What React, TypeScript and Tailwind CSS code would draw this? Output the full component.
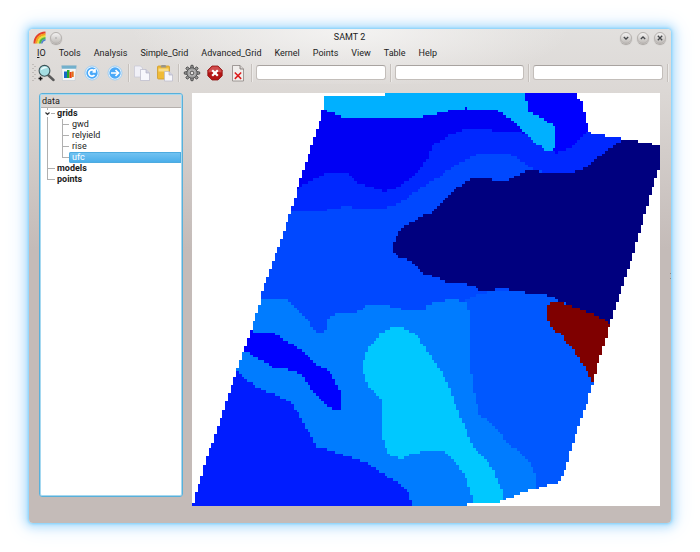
import React from "react";

type Point = [number, number];
type Region = { color: string; points: Point[] };

const MAP = { x: 192, y: 93, cols: 170, rows: 150, cell: 468 / 170 };

const outline: Point[] = [
  [325, 95], [386, 95], [386, 92], [575, 92], [582, 102], [585, 115], [588, 127], [590, 133], [602, 135],
  [617, 138], [632, 140], [647, 143], [661, 146], [661, 163], [654, 183], [644, 218], [636, 245], [627, 272],
  [619, 298], [610, 325], [598, 363], [593, 382], [588, 400], [580, 423], [572, 447], [565, 470], [560, 482],
  [548, 485], [535, 489], [520, 493], [510, 498], [500, 500], [499, 502], [467, 503], [466, 506], [192, 506],
  [195, 497], [205, 463], [218, 427], [237, 370], [244, 350], [251, 330], [261, 300], [262, 292], [291, 212],
  [298, 187], [322, 115],
];

const regions: Region[] = [
  { color: "#0028ff", points: [
    [280, 90], [661, 90], [640, 130], [622, 140], [605, 152], [595, 160], [585, 168], [572, 172], [542, 172],
    [532, 168], [522, 162], [510, 154], [478, 154], [455, 165], [442, 175], [425, 185], [402, 202], [385, 208],
    [342, 207], [323, 211], [298, 211], [280, 208]] },
  { color: "#0000f4", points: [
    [290, 90], [527, 90], [540, 140], [525, 134], [521, 131], [505, 133], [487, 129], [465, 129], [450, 135],
    [433, 145], [428, 157], [423, 165], [415, 175], [402, 185], [385, 192], [358, 183], [347, 173], [328, 173],
    [312, 180], [298, 188], [280, 200]] },
  { color: "#0000ff", points: [
    [524, 90], [600, 90], [592, 128], [588, 132], [580, 138], [572, 148], [555, 153], [549, 148], [520, 110]] },
  { color: "#00b0ff", points: [
    [310, 90], [524, 90], [527, 102], [527, 111], [542, 118], [555, 126], [555, 147], [549, 151], [542, 148],
    [525, 134], [512, 120], [501, 112], [491, 109], [468, 109], [467, 107], [465, 109], [455, 109], [441, 113],
    [425, 116], [408, 119], [362, 119], [358, 117], [342, 117], [333, 113], [322, 109], [310, 105]] },
  { color: "#0058ff", points: [
    [465, 301], [473, 296], [492, 291], [560, 291], [640, 300], [620, 500], [538, 510], [470, 500]] },
  { color: "#007cff", points: [
    [240, 300], [266, 300], [272, 298], [288, 301], [302, 313], [312, 327], [318, 333], [327, 330], [328, 320],
    [337, 312], [357, 313], [365, 306], [388, 306], [405, 310], [425, 311], [425, 307], [430, 304], [438, 301],
    [443, 302], [447, 300], [458, 300], [467, 304], [471, 317], [470, 360], [473, 390], [480, 415], [493, 425],
    [508, 443], [528, 460], [535, 473], [540, 510], [190, 510]] },
  { color: "#00c8ff", points: [
    [392, 328], [382, 332], [368, 348], [364, 360], [364, 375], [370, 388], [382, 400], [381, 423], [384, 443],
    [389, 454], [401, 459], [412, 454], [425, 451], [440, 450], [448, 454], [463, 472], [469, 487], [474, 502],
    [502, 502], [502, 490], [493, 470], [487, 460], [472, 445], [463, 423], [455, 403], [450, 388], [440, 370],
    [425, 348], [415, 333], [403, 328]] },
  { color: "#001cff", points: [
    [230, 364], [237, 370], [255, 387], [275, 395], [292, 403], [302, 420], [317, 447], [341, 454], [365, 462],
    [385, 475], [398, 482], [408, 493], [414, 507], [185, 510]] },
  { color: "#0000ff", points: [
    [240, 330], [251, 330], [256, 332], [273, 333], [302, 350], [313, 362], [330, 372], [341, 393], [342, 410],
    [337, 409], [328, 407], [315, 395], [302, 375], [288, 369], [275, 368], [257, 358], [244, 350], [230, 348]] },
  { color: "#00007f", points: [
    [622, 140], [640, 130], [670, 140], [670, 180], [612, 330], [605, 319], [588, 313], [572, 306], [557, 300],
    [552, 296], [528, 293], [505, 289], [495, 289], [492, 292], [480, 291], [473, 285], [447, 282], [435, 277],
    [425, 274], [412, 262], [395, 255], [391, 247], [396, 237], [403, 227], [425, 215], [432, 212], [447, 197],
    [458, 187], [470, 179], [490, 179], [497, 181], [508, 181], [517, 175], [528, 170], [542, 172], [572, 172],
    [585, 168], [595, 160], [605, 152]] },
  { color: "#7f0000", points: [
    [547, 307], [550, 303], [560, 303], [572, 306], [588, 313], [605, 319], [612, 326], [600, 370], [593, 384],
    [585, 368], [572, 347], [558, 332], [550, 327], [547, 318]] },
];

function contains(points: Point[], x: number, y: number) {
  let inside = false;
  for (let i = 0, j = points.length - 1; i < points.length; j = i++) {
    const [xi, yi] = points[i];
    const [xj, yj] = points[j];
    if (yi > y !== yj > y && x < ((xj - xi) * (y - yi)) / (yj - yi) + xi) inside = !inside;
  }
  return inside;
}

// Samples the soil regions on the raster and joins equal cells of a row into runs.
function rasterise() {
  const paths: Record<string, string> = {};
  for (let r = 0; r < MAP.rows; r++) {
    const y = MAP.y + (r + 0.5) * MAP.cell;
    let start = 0;
    let current = "";
    for (let c = 0; c <= MAP.cols; c++) {
      const x = MAP.x + (c + 0.5) * MAP.cell;
      let color = "";
      if (c < MAP.cols && contains(outline, x, y)) {
        color = "#0048ff";
        for (const region of regions) if (contains(region.points, x, y)) color = region.color;
      }
      if (color !== current) {
        if (current) paths[current] = (paths[current] ?? "") + `M${start} ${r}H${c}V${r + 1}H${start}Z`;
        start = c;
        current = color;
      }
    }
  }
  return Object.entries(paths);
}

const layers = rasterise();

function GridMap() {
  return (
    <svg viewBox="0 0 170 150" shapeRendering="crispEdges" role="img" aria-label="ufc grid" className="block w-full bg-white">
      {layers.map(([color, d]) => <path key={color} d={d} fill={color} />)}
    </svg>
  );
}

const ico = "block size-[18px]";

function ZoomIcon() {
  return (
    <svg viewBox="0 0 18 18" className={ico}>
      <path d="M11 11l5.500 5" stroke="#5a5a5a" strokeWidth="2.400" strokeLinecap="round" />
      <circle cx="7.500" cy="6.800" r="5.400" fill="#a4dde2" stroke="#3c5357" strokeWidth="1.100" />
      <path d="M3.600 6.500a4 4 0 0 1 7-2.400c-2 .2-5 .8-7 2.400z" fill="#e9fafa" />
      <path d="M3.500 12.500v4M1.500 14.500h4" stroke="#111" strokeWidth="1.400" />
    </svg>
  );
}
function ChartIcon() {
  return (
    <svg viewBox="0 0 18 18" className={ico}>
      <path d="M1.500 2h15L15 16.500H2.500z" fill="#f3f6f8" stroke="#c2c8cc" strokeWidth=".6" />
      <path d="M1.500 1.500h15l-.4 3.300H1.900z" fill="#72b0cc" />
      <path d="M4 7.500h3V14H4z" fill="#1668c8" />
      <path d="M7 6h2.500v8H7z" fill="#24a82c" />
      <path d="M9.500 8h2.200v6H9.500z" fill="#e93d10" />
      <path d="M11.700 7.500h2V13h-2z" fill="#e2711b" />
    </svg>
  );
}
function RoundIcon({ children }: { children: React.ReactNode }) {
  return (
    <svg viewBox="0 0 18 18" className={ico}>
      <circle cx="9" cy="9" r="7" fill="#eef7fe" stroke="#8fc6f2" strokeWidth=".8" />
      <circle cx="9" cy="9" r="5.700" fill="#4ba9f8" />
      <g fill="none" stroke="#fff" strokeWidth="1.700">{children}</g>
    </svg>
  );
}
function CopyIcon() {
  return (
    <svg viewBox="0 0 18 18" className={ico}>
      <path d="M1.500 2h6l2 2v9h-8z" fill="#f0f0f7" stroke="#c6c6d4" strokeWidth=".7" />
      <path d="M7.500 5.500h5.500l3.500 3.500v7.500h-9z" fill="#f7f7fc" stroke="#b9b9ca" strokeWidth=".7" />
      <path d="M13 5.500V9h3.500" fill="#d0d0e0" stroke="#b3b3c4" strokeWidth=".7" />
    </svg>
  );
}
function PasteIcon() {
  return (
    <svg viewBox="0 0 18 18" className={ico}>
      <rect x="1.500" y="2" width="12" height="13" rx="1" fill="#f0bb36" stroke="#cf9a2a" strokeWidth=".8" />
      <path d="M2.500 4.500h10v3h-10z" fill="#f8dc88" />
      <path d="M4.500 3.500l1-2.500h4l1 2.500z" fill="#98958c" />
      <path d="M8.500 7.500H13l3.500 3.500v6h-8z" fill="#f7f7fc" stroke="#b9b9ca" strokeWidth=".7" />
      <path d="M13 7.500V11h3.500" fill="#d0d0e0" stroke="#b3b3c4" strokeWidth=".7" />
    </svg>
  );
}
function GearIcon() {
  return (
    <svg viewBox="0 0 18 18" className={ico}>
      {[0, 45, 90, 135, 180, 225, 270, 315].map((a) => (
        <path key={a} d="M7.500 4.500L8 1.300h2l.5 3.200z" fill="#999" stroke="#4b4b4b" strokeWidth=".9" transform={`rotate(${a} 9 9)`} />
      ))}
      <circle cx="9" cy="9" r="5.200" fill="#a2a2a2" stroke="#4f4f4f" strokeWidth=".9" />
      <circle cx="9" cy="9" r="3.300" fill="#b8b8b8" />
      <circle cx="9" cy="9" r="1.900" fill="#e4e2e0" stroke="#505050" strokeWidth="1" />
    </svg>
  );
}
function StopIcon() {
  return (
    <svg viewBox="0 0 18 18" className={ico}>
      <path d="M6 2h6l4.200 4.200v5.600L12 16H6l-4.200-4.200V6.200z" fill="#b41414" stroke="#8a1010" strokeWidth=".8" />
      <path d="M6.200 2.600h5.600l3.700 3.700v2.200q-6.500-1.500-13 0V6.300z" fill="#d65a5a" opacity=".8" />
      <path d="M6.200 6.200l5.600 5.600M11.800 6.200l-5.600 5.600" stroke="#fff" strokeWidth="2.200" />
    </svg>
  );
}
function DeleteIcon() {
  return (
    <svg viewBox="0 0 18 18" className={ico}>
      <path d="M3.500 1.500H11l3.500 3.500v12h-11z" fill="#f1eeec" stroke="#8d8784" strokeWidth=".8" />
      <path d="M11 1.500V5h3.500" fill="#d8d4d2" stroke="#77706d" strokeWidth=".8" />
      <path d="M5.800 8.500l6.400 6.400M12.200 8.500l-6.400 6.400" stroke="#dc1c1c" strokeWidth="1.500" />
    </svg>
  );
}

function RainbowIcon() {
  return (
    <svg viewBox="0 0 14 14" className="block size-[14px]">
      <g fill="none" strokeWidth="2.100">
        <path d="M1.500 12.500C1.500 6 6 1.800 12.500 1.500" stroke="#e5402b" />
        <path d="M3.300 12.500C3.500 7 7 3.800 12.500 3.400" stroke="#f5a11c" />
        <path d="M5.200 12.500C5.500 8.500 8 5.800 12.500 5.300" stroke="#e8e03a" />
        <path d="M7 12.500C7.300 9.500 9 7.500 12.500 7.100" stroke="#52b648" />
        <path d="M8.700 12.500C9 10.500 10.200 9.200 12.500 8.800" stroke="#4d7fd0" strokeWidth="1.500" />
      </g>
    </svg>
  );
}

function TitleButton({ label, children }: { label: string; children: React.ReactNode }) {
  return (
    <button type="button" aria-label={label}
      className="size-[12px] rounded-full border border-[#b5b1ae] bg-gradient-to-b from-[#f3f2f1] to-[#c0bcb9] shadow-[0_1px_1px_#a8a3a0]">
      <svg viewBox="0 0 10 10" className="block size-[10px]" fill="none" stroke="#45474a" strokeWidth="1.300">{children}</svg>
    </button>
  );
}

const Sep = () => <div className="h-[18px] w-px shrink-0 bg-[#c6c1bd] shadow-[1px_0_0_#eceae8]" />;

function ToolButton({ label, children }: { label: string; children: React.ReactNode }) {
  return <button type="button" aria-label={label} className="size-[18px] shrink-0">{children}</button>;
}

function Field({ label }: { label: string }) {
  return <input type="text" aria-label={label} className="h-[15px] w-0 min-w-0 flex-1 rounded-[3px] border border-[#c3beba] border-t-[#a8a3a0] bg-white px-1 outline-none" />;
}

const menus = ["IO", "Tools", "Analysis", "Simple_Grid", "Advanced_Grid", "Kernel", "Points", "View", "Table", "Help"];

function Branch({ d, arrow }: { d: string; arrow?: boolean }) {
  return (
    <svg viewBox="0 0 28 11" className="absolute top-0 left-0 h-[11px] w-[28px]" fill="none" stroke="#b0b0b0" shapeRendering="crispEdges">
      <path d={d} />
      {arrow && <path d="M4.500 4.500l2 2 2-2" stroke="#333" strokeWidth="1.200" shapeRendering="auto" />}
    </svg>
  );
}

const rootRow = "relative block h-[11px] w-full pl-[16px] text-left font-bold";
const childRow = "relative flex h-[11px] w-full pl-[28px]";

function Tree() {
  const children = ["gwd", "relyield", "rise", "ufc"];
  return (
    <ul className="leading-[11px]">
      <li>
        <button type="button" className={rootRow}><Branch d="M6.500 0v2M6.500 9v2M10 5.500h4" arrow />grids</button>
        <ul>
          {children.map((name) => (
            <li key={name} className={childRow}>
              <Branch d={name === "ufc" ? "M6.500 0v11M21.500 0v5.500h7" : "M6.500 0v11M21.500 0v11M21.500 5.500h7"} />
              {name === "ufc" ? (
                <button type="button" className="flex-1 rounded-l-[2px] bg-gradient-to-b from-[#75c4f2] to-[#45ace9] pl-[3px] text-left text-white shadow-[inset_0_0_0_1px_#4dabe0]">{name}</button>
              ) : (
                <button type="button" className="flex-1 pl-[3px] text-left">{name}</button>
              )}
            </li>
          ))}
        </ul>
      </li>
      <li><button type="button" className={rootRow}><Branch d="M6.500 0v11M6.500 5.500h7" />models</button></li>
      <li><button type="button" className={rootRow}><Branch d="M6.500 0v5.500h7" />points</button></li>
    </ul>
  );
}

export default function App() {
  return (
    <div className="min-h-screen bg-white px-[29px] pt-[29px] pb-[29px] font-[Roboto,'Open_Sans',sans-serif] text-[9px] text-[#1c1c1c]">
      <div className="relative rounded-[4px] bg-[linear-gradient(180deg,#e2e0de_0px,#dcd8d5_62px,#c4bbb8_220px)] shadow-[0_0_3px_1px_#7fd0fa,0_0_10px_4px_#b5e0fd,0_0_22px_5px_#e4f1fd]">
        <div className="rounded-t-[4px] bg-[radial-gradient(ellipse_220px_60px_at_50%_0,#f4f3f2,transparent)]">
          <header className="flex h-[17px] items-center pr-[5px] pl-[4px]">
            <div className="flex flex-1 items-center gap-[3px]">
              <RainbowIcon />
              <TitleButton label="On all desktops"><circle cx="5" cy="5" r=".5" stroke="#999" strokeWidth=".6" /></TitleButton>
            </div>
            <h1 className="leading-[17px]">SAMT 2</h1>
            <div className="flex flex-1 justify-end gap-[5px]">
              <TitleButton label="Minimize"><path d="M2.800 4L5 6l2.200-2" /></TitleButton>
              <TitleButton label="Maximize"><path d="M2.800 6L5 4l2.200 2" /></TitleButton>
              <TitleButton label="Close"><path d="M2.800 2.800l4.400 4.400M7.200 2.800L2.800 7.200" /></TitleButton>
            </div>
          </header>
          <nav className="flex h-[15px] items-center gap-[13px] pl-[8px]">
            {menus.map((m) => (
              <button type="button" key={m} className="leading-[15px]">
                {m === "IO" ? <><span className="underline">I</span>O</> : m}
              </button>
            ))}
          </nav>
          <div className="flex h-[23px] items-center gap-[4px] px-[3px]">
            <svg viewBox="0 0 4 18" className="-mr-[3px] h-[18px] w-[4px] shrink-0" fill="none" stroke="#a39e9b">
              <path d="M1 0v18M3 2v16" strokeDasharray="1 3" />
            </svg>
            <div className="flex shrink-0 gap-[5px]">
              <ToolButton label="Zoom"><ZoomIcon /></ToolButton>
              <ToolButton label="Chart"><ChartIcon /></ToolButton>
              <ToolButton label="Reload"><RoundIcon><path d="M11.500 7a3.200 3.200 0 1 0 0 4M12 5v3H9.500" /></RoundIcon></ToolButton>
              <ToolButton label="Forward"><RoundIcon><path d="M5 9h7M9.500 6l3 3-3 3" /></RoundIcon></ToolButton>
            </div>
            <Sep />
            <div className="flex shrink-0 gap-[5px]">
              <ToolButton label="Copy"><CopyIcon /></ToolButton>
              <ToolButton label="Paste"><PasteIcon /></ToolButton>
            </div>
            <Sep />
            <div className="flex shrink-0 gap-[5px]">
              <ToolButton label="Settings"><GearIcon /></ToolButton>
              <ToolButton label="Stop"><StopIcon /></ToolButton>
              <ToolButton label="Delete"><DeleteIcon /></ToolButton>
            </div>
            <div className="flex min-w-0 flex-1 items-center gap-[4px]">
              <Sep />
              <Field label="Name" />
              <Sep />
              <Field label="Position" />
              <Sep />
              <Field label="Value" />
              <Sep />
            </div>
          </div>
        </div>
        <main className="flex gap-[9px] pt-[9px] pr-[11px] pb-[17px] pl-[10px]">
          <aside className="mb-[9px] w-[144px] shrink-0 rounded-[3px] border border-[#58b0da] bg-white p-px shadow-[inset_0_0_0_1px_#a5d8f0]">
            <div className="h-[13px] border-b border-[#b5b0ad] bg-[#dad6d3] pl-[1px] leading-[12px]">data</div>
            <Tree />
          </aside>
          <div className="min-w-0 flex-1"><GridMap /></div>
        </main>
        <div className="absolute top-[244px] right-0 h-[6px] w-px border-y border-[#8f8986]" />
      </div>
    </div>
  );
}
